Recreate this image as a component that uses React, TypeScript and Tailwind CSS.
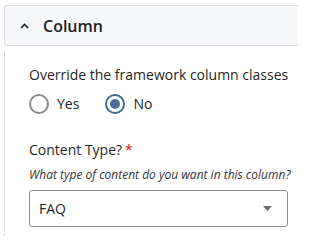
import { useState } from 'react';

export default function App() {
  const [override, setOverride] = useState<'yes' | 'no'>('no');

  return (
    <div className="w-[298px] h-[236px] overflow-hidden bg-white pt-[5px] pl-[4px] text-[#1f1f24]" style={{ fontFamily: '"Open Sans", "Noto Sans", sans-serif' }}>
      {/* Section header */}
      <div className="flex items-center h-[41px] bg-[#f6f7f9] border border-r-0 border-[#dcdee3] rounded-l-[3px]">
        <svg className="ml-[15px] w-[9px] h-[6px]" viewBox="0 0 9 6" fill="none">
          <path d="M1 5 L4.5 1.5 L8 5" stroke="#1f1f24" strokeWidth="1.6" />
        </svg>
        <span className="ml-[14px] text-[16px] font-semibold leading-none">Column</span>
      </div>

      {/* Body */}
      <div className="border-l border-dotted border-[#c4c6ca] mt-[6px] h-[200px] pl-[24px] pt-[13px]">
        <p className="text-[14px] leading-[20px] whitespace-nowrap">Override the framework column classes</p>

        <div className="flex items-center gap-[26px] mt-[9px] h-[20px]">
          <label className="flex items-center gap-[8px] cursor-pointer" onClick={() => setOverride('yes')}>
            <span className={override === 'yes' ? 'w-[20px] h-[20px] rounded-full border-2 border-[#3d6a98] flex items-center justify-center' : 'w-[20px] h-[20px] rounded-full border-2 border-[#8a8a8f]'}>
              {override === 'yes' && <span className="w-[10px] h-[10px] rounded-full bg-[#4a709b]" />}
            </span>
            <span className="text-[14px] leading-[20px]">Yes</span>
          </label>
          <label className="flex items-center gap-[8px] cursor-pointer" onClick={() => setOverride('no')}>
            <span className={override === 'no' ? 'w-[20px] h-[20px] rounded-full border-2 border-[#3d6a98] flex items-center justify-center' : 'w-[20px] h-[20px] rounded-full border-2 border-[#8a8a8f]'}>
              {override === 'no' && <span className="w-[10px] h-[10px] rounded-full bg-[#4a709b]" />}
            </span>
            <span className="text-[14px] leading-[20px]">No</span>
          </label>
        </div>

        <p className="mt-[26px] text-[14px] leading-[20px]">
          Content Type?<span className="text-[#d72222] ml-[3px]">*</span>
        </p>
        <p className="mt-[6px] text-[12px] leading-[17px] italic text-[#33333a] whitespace-nowrap">What type of content do you want in this column?</p>

        <div className="mt-[7px] w-[259px] h-[37px] border border-[#8d8d92] rounded-[3px] flex items-center justify-between pl-[9px] pr-[15px]">
          <span className="text-[14px]">FAQ</span>
          <svg className="w-[9px] h-[5px]" viewBox="0 0 9 5">
            <path d="M0 0 L9 0 L4.5 5 Z" fill="#6b6b70" />
          </svg>
        </div>
      </div>
    </div>
  );
}
